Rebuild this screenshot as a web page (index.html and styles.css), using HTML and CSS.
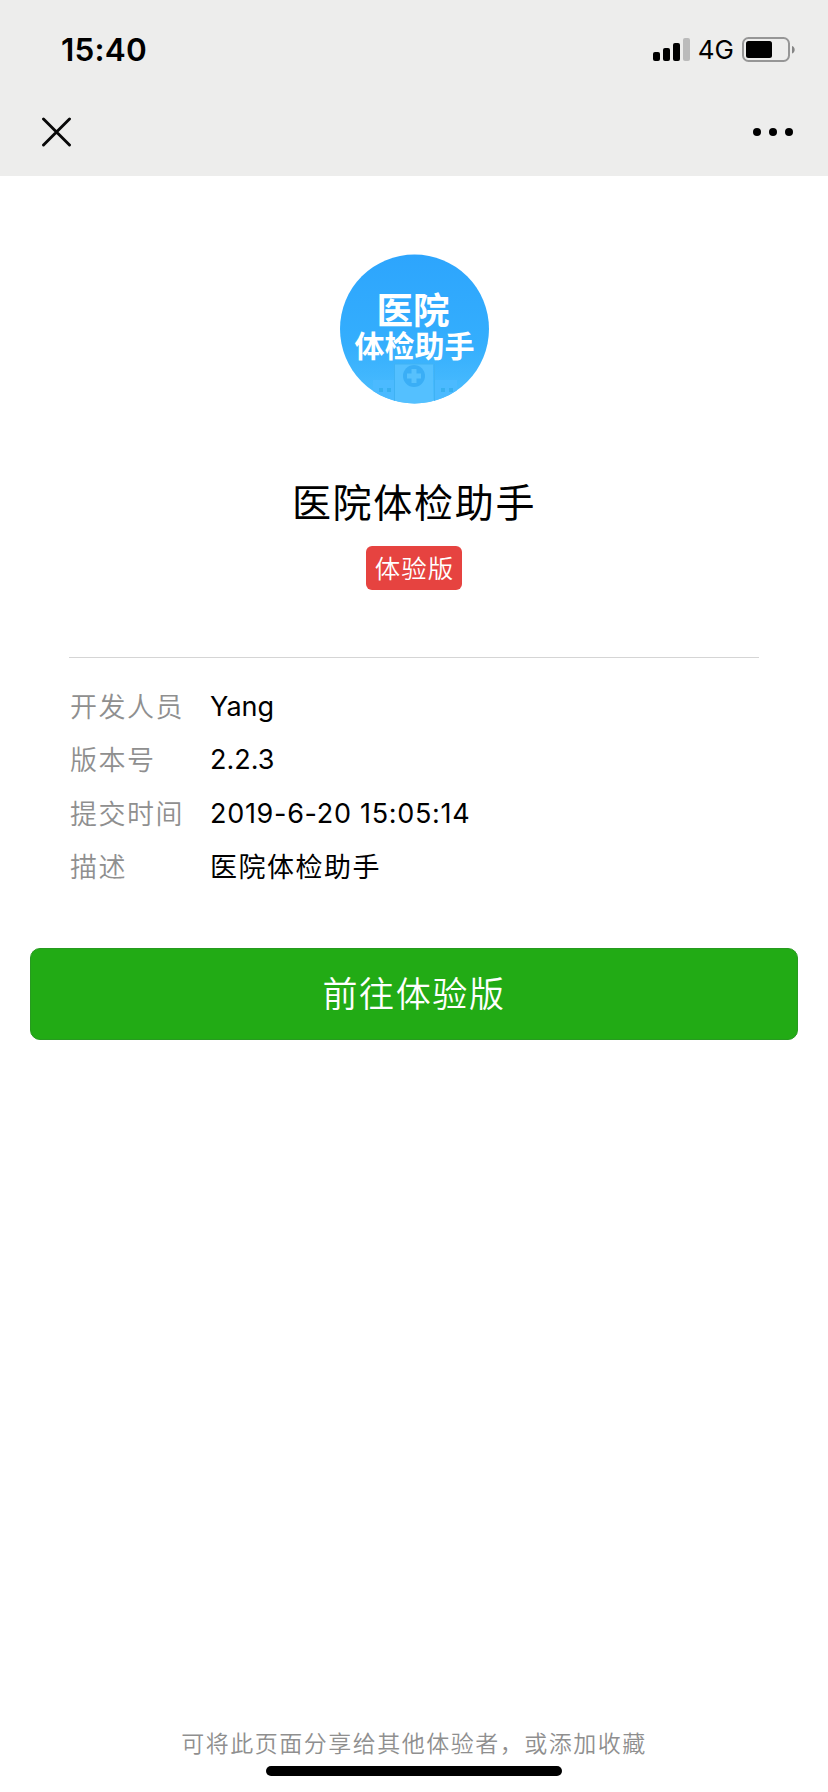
FILE: index.html
```html
<!DOCTYPE html>
<html lang="zh-CN">
<head>
<meta charset="utf-8">
<title>医院体检助手</title>
<link rel="stylesheet" href="styles.css">
</head>
<body>
<div class="screen">
  <header class="top">
    <div class="status">
      <span class="time">15:40</span>
      <div class="indicators">
        <svg class="signal" width="38" height="24" viewBox="0 0 38 24">
          <rect x="0" y="14" width="7" height="9" rx="2"/>
          <rect x="10" y="10" width="7" height="13" rx="2"/>
          <rect x="20" y="5" width="7" height="18" rx="2"/>
          <rect x="30" y="0" width="7" height="23" rx="2" fill="#bbb"/>
        </svg>
        <span class="network">4G</span>
        <svg class="battery" width="53" height="26" viewBox="0 0 53 26">
          <rect x="1" y="1" width="46" height="23" rx="5.5" fill="none" stroke="#969696" stroke-width="2"/>
          <rect x="4" y="4" width="26" height="17" rx="2.5"/>
          <path d="M50 9c3.600 1 3.600 6.500 0 7.500z" fill="#858585"/>
        </svg>
      </div>
    </div>
    <nav class="nav">
      <svg width="30" height="30" viewBox="0 0 30 30"><path d="M2.500 2l26 26M28.500 2l-26 26" fill="none" stroke="#080808" stroke-width="2.900" stroke-linecap="round"/></svg>
      <svg width="40" height="8" viewBox="0 0 40 8"><circle cx="4" cy="4" r="4"/><circle cx="20" cy="4" r="4"/><circle cx="36" cy="4" r="4"/></svg>
    </nav>
  </header>

  <main class="main">
    <svg class="logo" width="150" height="150" viewBox="0 0 150 150">
      <defs>
        <linearGradient id="sky" x1="0" y1="0" x2="0" y2="1">
          <stop offset="0" stop-color="#2da5fd"/>
          <stop offset=".6" stop-color="#34aefd"/>
          <stop offset="1" stop-color="#4dbefe"/>
        </linearGradient>
        <clipPath id="disc"><circle cx="75.500" cy="75" r="74.500"/></clipPath>
      </defs>
      <g clip-path="url(#disc)">
        <rect width="150" height="150" fill="url(#sky)"/>
        <path d="M34 126h22v24H34zM95 126h23v24H95z" fill="#4bbaff"/>
        <path d="M56 110h38v40H56z" fill="#54c0ff"/>
        <path d="M56 110h38M55.500 110v40M95.500 110v40" stroke="#3fb2f4" fill="none"/>
        <circle cx="75" cy="122" r="11" fill="#3aaef6"/>
        <path d="M72.500 115h5v4.500H82v5h-4.500v4.500h-5v-4.500H68v-5h4.500z" fill="#57c1fd"/>
        <path d="M40 134h4v4h-4zM48 134h4v4h-4zM102 134h4v4h-4zM110 134h4v4h-4z" fill="#37afef"/>
      </g>
      <text class="logo-text" x="74" y="69.500" font-size="36.500">医院</text>
      <text class="logo-text" x="75.500" y="102.500" font-size="30">体检助手</text>
    </svg>
    <h1 class="title">医院体检助手</h1>
    <span class="badge">体验版</span>

    <dl class="details">
      <dt>开发人员</dt><dd>Yang</dd>
      <dt>版本号</dt><dd>2.2.3</dd>
      <dt>提交时间</dt><dd class="date">2019-6-20 15:05:14</dd>
      <dt>描述</dt><dd class="cjk">医院体检助手</dd>
    </dl>

    <button class="enter" type="button">前往体验版</button>
  </main>

  <footer class="footer">
    <p class="hint">可将此页面分享给其他体验者，或添加收藏</p>
    <div class="home-bar"></div>
  </footer>
</div>
</body>
</html>
```

FILE: styles.css
```css
* { box-sizing: border-box; margin: 0; padding: 0; }

body {
  background: #fff;
  color: #000;
  font-family: Inter, "Noto Sans CJK SC", sans-serif;
}

svg { display: block; }

.screen {
  display: flex;
  flex-direction: column;
  width: 828px;
  height: 1792px;
}

.top {
  height: 176px;
  background: #ededec;
}

.status {
  display: flex;
  justify-content: space-between;
  align-items: center;
  height: 100px;
  padding: 0 33px 0 61px;
}

.time {
  font-size: 31.5px;
  font-weight: 600;
  line-height: 40px;
  letter-spacing: 0.2px;
}

.indicators {
  display: flex;
  align-items: center;
}

.network {
  margin: 0 8px 0 7px;
  font-size: 26px;
  line-height: 40px;
}

.nav {
  display: flex;
  justify-content: space-between;
  align-items: center;
  height: 63px;
  padding: 0 35px 0 41px;
}

.main {
  display: flex;
  flex-direction: column;
  align-items: center;
  flex: 1;
  padding-top: 78px;
}

.logo-text {
  fill: #fff;
  font-family: "Noto Sans CJK SC", sans-serif;
  font-weight: 700;
  text-anchor: middle;
}

.title {
  margin-top: 69px;
  font-size: 39px;
  font-weight: 400;
  line-height: 60px;
  letter-spacing: 1.7px;
}

.badge {
  height: 44px;
  margin-top: 13px;
  padding: 0 8px 0 9px;
  border-radius: 6px;
  background: #e64340;
  color: #fff;
  font-family: "Noto Sans CJK SC", sans-serif;
  font-size: 25.5px;
  font-weight: 350;
  line-height: 42px;
  letter-spacing: 1px;
}

.details {
  display: grid;
  grid-template-columns: 141px 1fr;
  grid-auto-rows: 53.4px;
  width: 690px;
  margin-top: 67px;
  padding-top: 22px;
  border-top: 1px solid #d5d5d5;
  font-size: 27px;
  line-height: 54px;
}

.details dt {
  padding-left: 1px;
  color: #8f8f8f;
  font-weight: 350;
  letter-spacing: 1.5px;
  line-height: 55px;
}

.details .cjk {
  letter-spacing: 1.5px;
  line-height: 55px;
}

.details .date { letter-spacing: 0.7px; }

.enter {
  width: 768px;
  height: 92px;
  margin-top: 54px;
  padding-bottom: 4px;
  border: 1px solid #279a20;
  border-radius: 10px;
  background: #22ab15;
  color: #fff;
  font: 350 35px/84px "Noto Sans CJK SC", sans-serif;
  letter-spacing: 1.6px;
}

.footer {
  display: flex;
  flex-direction: column;
  align-items: center;
  padding-bottom: 16px;
}

.hint {
  color: #8f8f8f;
  font-size: 23px;
  font-weight: 350;
  line-height: 36px;
  letter-spacing: 1.5px;
}

.home-bar {
  width: 296px;
  height: 10px;
  margin-top: 4px;
  border-radius: 5px;
  background: #000;
}
```
